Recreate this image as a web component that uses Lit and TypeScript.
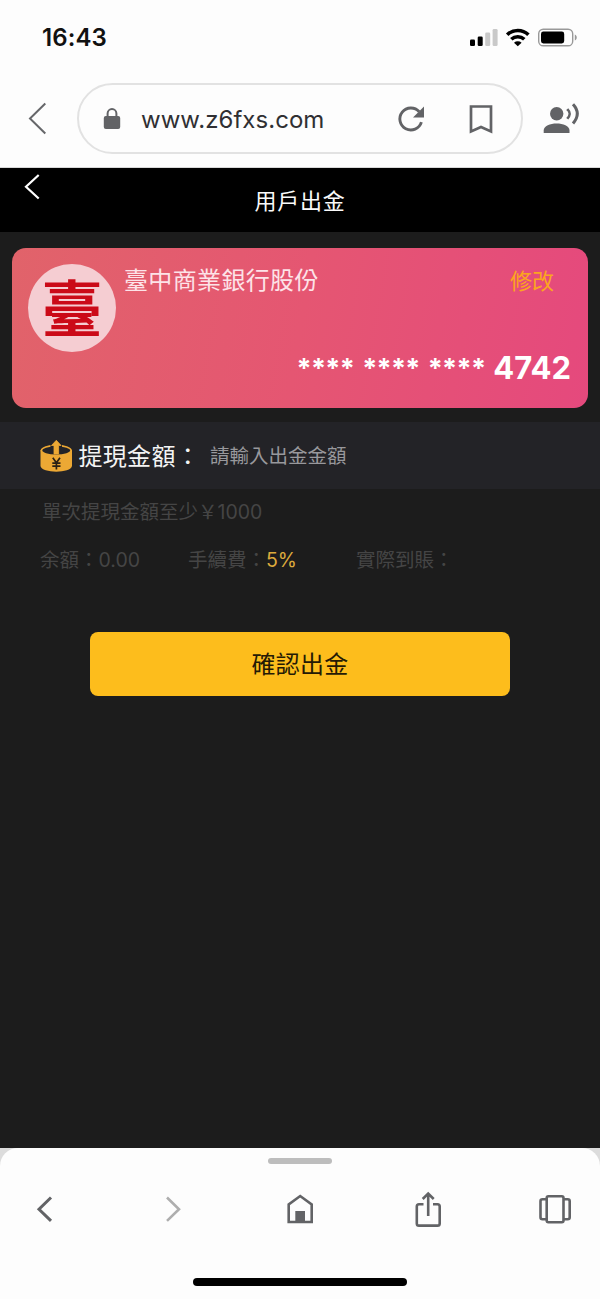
import { LitElement, html, css } from "lit";
import { customElement } from "lit/decorators.js";

@customElement("status-bar")
class StatusBar extends LitElement {
  static styles = css`
    :host { display: flex; height: 74px; align-items: center; padding: 1px 22px 0 42px; justify-content: space-between; box-sizing: border-box; flex: none; }
    .time { font: 600 24px/30px Inter, sans-serif; color: #111; letter-spacing: 0.1px; }
    svg { display: block; }
  `;
  render() {
    return html`
      <span class="time">16:43</span>
      <svg width="108" height="24" viewBox="470 25.500 108 24">
        <rect x="470" y="39" width="5" height="6.5" rx="1.3" />
        <rect x="477.7" y="36" width="5" height="9.5" rx="1.3" />
        <rect x="485.2" y="32" width="5" height="13.5" rx="1.3" fill="#c9c9c9" />
        <rect x="492.6" y="28.5" width="5" height="17" rx="1.3" fill="#c9c9c9" />
        <g fill="none" stroke="#000" stroke-width="3.6">
          <path d="M507.200 34.200a15.300 15.300 0 0 1 21.200 0" />
          <path d="M511.3 38.8a9.4 9.4 0 0 1 13 0" />
        </g>
        <path d="M514 42.200a5.6 5.6 0 0 1 7.6 0l-3.8 3.6z" />
        <rect x="538.7" y="28.7" width="34" height="16.6" rx="4.6" fill="none" stroke="#999" stroke-width="1.4" />
        <rect x="541" y="31" width="23.2" height="12" rx="2.4" />
        <path d="M574.8 34v6c2.6-.8 2.6-5.2 0-6z" fill="#999" />
      </svg>
    `;
  }
}

@customElement("address-bar")
class AddressBar extends LitElement {
  static styles = css`
    :host { display: flex; height: 94px; box-sizing: border-box; border-bottom: 1.5px solid #d8d8d8; align-items: flex-start; padding: 9px 19px 0 28px; flex: none; }
    .side { margin-top: 19px; }
    .pill { display: flex; align-items: center; box-sizing: border-box; width: 446px; height: 71px; margin: 0 20px 0 28px; border: 2px solid #e2e2e2; border-radius: 36px; padding: 0 27px 0 23px; flex: none; }
    .url { font: 400 24px/32px Inter, sans-serif; color: #303033; margin: 2px 0 0 19px; flex: 1; white-space: nowrap; letter-spacing: 0.04px; }
    .mark { margin-left: 43px; }
    svg { display: block; flex: none; }
  `;
  render() {
    return html`
      <svg class="side" width="21" height="34" viewBox="28 102 21 34" fill="none" stroke="#66676a" stroke-width="2">
        <path d="M45.3 103.5L30 118.5l15.3 15" />
      </svg>
      <div class="pill">
        <svg width="20" height="24" viewBox="102 106.500 20 24">
          <rect x="103.8" y="115.4" width="16.4" height="13" rx="2" fill="#626366" />
          <path d="M107.6 116v-3a4.4 4.4 0 0 1 8.8 0v3" fill="none" stroke="#626366" stroke-width="2" />
        </svg>
        <span class="url">www.z6fxs.com</span>
        <svg width="28" height="28" viewBox="397 104.500 28 28">
          <path d="M421.4 121.7a11 11 0 1 1-2.2-10.400" fill="none" stroke="#626366" stroke-width="2.9" />
          <path d="M424 106v11h-11z" fill="#626366" />
        </svg>
        <svg class="mark" width="26" height="30" viewBox="468.500 103 26 30">
          <path d="M471.500 130.500V105.500h20V130.500l-10-4.500z" fill="none" stroke="#626366" stroke-width="2.700" />
        </svg>
      </div>
      <svg class="side" width="38" height="34" viewBox="543 102 38 34">
        <circle cx="556.700" cy="113.700" r="6.700" fill="#626366" />
        <path d="M543.700 133v-2.500c0-9.300 25.800-9.300 25.800 0v2.500z" fill="#626366" />
        <path d="M566.200 110q4.600 3.500 0 8l2.100 1.500q5.200-5.800 0-11.200z" fill="#626366" />
        <path d="M573 104.200q8.600 9.200 0 19.300" fill="none" stroke="#626366" stroke-width="3" />
      </svg>
    `;
  }
}

@customElement("bank-card")
class BankCard extends LitElement {
  static styles = css`
    :host { display: flex; flex-direction: column; box-sizing: border-box; height: 160px; margin: 16px 12px 14px; padding: 16px 17px 20px 16px; border-radius: 14px; background: linear-gradient(100deg, #e1636a 0%, #e55672 50%, #e5497d 100%); color: #fff; }
    .top { display: flex; height: 88px; }
    .seal { display: flex; justify-content: center; width: 88px; height: 88px; border-radius: 50%; background: #f5cdd2; color: #cb0a18; font: 700 61px/84px "Noto Sans CJK TC", sans-serif; }
    .bank { margin-left: 8px; flex: 1; font: 400 24px/30px "Noto Sans CJK TC", sans-serif; letter-spacing: 0.35px; color: #fde3e8; }
    .edit { font: 400 22px/30px "Noto Sans CJK TC", sans-serif; color: #fba51e; margin-right: 17px; }
    .number { display: flex; justify-content: flex-end; align-items: center; height: 32px; font: 700 31px/32px Inter, sans-serif; }
    .group { font-size: 27px; line-height: 34px; height: 32px; letter-spacing: -0.7px; margin-right: 8px; }
  `;
  render() {
    return html`
      <div class="top">
        <div class="seal">臺</div>
        <span class="bank">臺中商業銀行股份</span>
        <span class="edit">修改</span>
      </div>
      <div class="number">
        <span class="group">****</span><span class="group">****</span><span class="group">****</span><span class="last">4742</span>
      </div>
    `;
  }
}

@customElement("withdraw-form")
class WithdrawForm extends LitElement {
  static styles = css`
    :host { display: block; font-family: Inter, "Noto Sans CJK TC", sans-serif; }
    .amount { display: flex; align-items: center; height: 67px; padding-left: 40px; background: #232327; }
    .label { margin: -1px 0 0 5.5px; width: 131.5px; font: 400 24px/32px "Noto Sans CJK TC", sans-serif; letter-spacing: 0.3px; color: #f4f4f4; white-space: nowrap; }
    .hint { margin-top: -2px; font: 400 19.5px/32px "Noto Sans CJK TC", sans-serif; color: #98989c; }
    .note, .facts { font-size: 19.5px; line-height: 28px; font-weight: 400; color: #454545; }
    .note { margin: 9px 0 0 42px; }
    .facts { display: grid; grid-template-columns: 148px 168px auto; margin: 20px 0 0 40px; }
    .rate { color: #dcaa3c; font-weight: 400; }
    .submit { display: block; width: 420px; height: 64px; margin: 58px auto 0; padding: 0 0 2px; border: 0; border-radius: 8px; background: #fdbd1c; color: #251a05; font: 400 24px/62px "Noto Sans CJK TC", sans-serif; letter-spacing: 0.3px; }
    svg { display: block; }
  `;
  render() {
    return html`
      <div class="amount">
        <svg width="33" height="34" viewBox="40 438 33 34">
          <path d="M40.500 449v16c1 7.500 30.500 7.500 31.500 0v-16z" fill="#eca834" />
          <ellipse cx="56.250" cy="449.500" rx="14.800" ry="4.900" fill="#232327" stroke="#eca834" stroke-width="1.700" />
          <path d="M50.500 453v-9.500h11.500v9.500z" fill="#232327" />
          <path d="M54 453v-8.500h-2.500l4.800-5.200 4.800 5.200h-2.500v8.500z" fill="#eca834" stroke="#eca834" stroke-width=".8" stroke-linejoin="round" />
          <path d="M52.800 456.700l3.600 5 3.600-5M56.400 461.500v7M52.300 462.200h8.200M52.300 465.200h8.200" fill="none" stroke="#2a2115" stroke-width="1.700" />
        </svg>
        <span class="label">提現金額：</span>
        <span class="hint">請輸入出金金額</span>
      </div>
      <div class="note">單次提現金額至少￥1000</div>
      <div class="facts">
        <span>余額：0.00</span>
        <span>手續費：<span class="rate">5%</span></span>
        <span>實際到賬：</span>
      </div>
      <button class="submit">確認出金</button>
    `;
  }
}

@customElement("browser-toolbar")
class BrowserToolbar extends LitElement {
  static styles = css`
    :host { display: block; height: 151px; flex: none; background: #dcdcdc; }
    .sheet { display: flex; flex-direction: column; align-items: center; height: 151px; box-sizing: border-box; padding-top: 10px; background: #fdfdfd; border-radius: 18px 18px 0 0; }
    .grip { width: 64px; height: 6px; border-radius: 3px; background: #bdbdbd; }
    .icons { display: flex; justify-content: space-between; width: 550px; height: 40px; margin-top: 25px; }
    .home { width: 214px; height: 8px; border-radius: 4px; background: #000; margin-top: 49px; }
    svg { display: block; fill: none; stroke: #626366; stroke-width: 2.6; }
    .faded { stroke: #aeaeae; }
    .solid { fill: #626366; stroke: none; }
  `;
  render() {
    return html`
      <div class="sheet">
        <div class="grip"></div>
        <div class="icons">
          <svg width="40" height="40" viewBox="25 1189 40 40"><path d="M51 1197.500l-12 11.700 12 11.700" stroke-width="3" /></svg>
          <svg class="faded" width="40" height="40" viewBox="152.500 1189 40 40"><path d="M166.500 1197.500l12 11.700-12 11.700" /></svg>
          <svg width="40" height="40" viewBox="280 1189 40 40">
            <path d="M288.700 1222v-17.500l11.500-8.500 11.500 8.500V1222z" />
            <path class="solid" d="M295.300 1211h9.700v12h-9.700z" />
          </svg>
          <svg width="40" height="40" viewBox="407.500 1189 40 40">
            <path d="M423 1204.200h-4.500a2.200 2.200 0 0 0-2.200 2.200v17a2.200 2.200 0 0 0 2.200 2.200h18.500a2.200 2.200 0 0 0 2.200-2.200v-17a2.200 2.200 0 0 0-2.200-2.200h-4.500M427.700 1216v-22M422.200 1199l5.500-5.500 5.500 5.500" />
          </svg>
          <svg width="40" height="40" viewBox="535 1189 40 40">
            <rect x="546.700" y="1196.200" width="16.800" height="26" rx="1.700" />
            <path d="M546.500 1199.200h-4a2 2 0 0 0-2 2v16a2 2 0 0 0 2 2h4M563.700 1199.200h4a2 2 0 0 1 2 2v16a2 2 0 0 1-2 2h-4" />
          </svg>
        </div>
        <div class="home"></div>
      </div>
    `;
  }
}

@customElement("app-root")
class AppRoot extends LitElement {
  static styles = css`
    :host { display: flex; flex-direction: column; height: 1299px; background: #fdfdfd; overflow: hidden; }
    .title { display: grid; grid-template-columns: 60px 1fr 60px; height: 64px; flex: none; background: #000; }
    .title svg { display: block; margin: 4px 0 0 20px; }
    h1 { margin: 0; text-align: center; font: 400 22px/62px "Noto Sans CJK TC", sans-serif; letter-spacing: 0.7px; color: #fafafa; }
    main { flex: 1; background: #1c1c1c; display: flow-root; }
  `;
  render() {
    return html`
      <status-bar></status-bar>
      <address-bar></address-bar>
      <div class="title">
        <svg width="24" height="30" viewBox="20 172 24 30" fill="none" stroke="#fff" stroke-width="2.200"><path d="M38.700 175L26 186.800l12.700 11.700" /></svg>
        <h1>用戶出金</h1>
      </div>
      <main>
        <bank-card></bank-card>
        <withdraw-form></withdraw-form>
      </main>
      <browser-toolbar></browser-toolbar>
    `;
  }
}
